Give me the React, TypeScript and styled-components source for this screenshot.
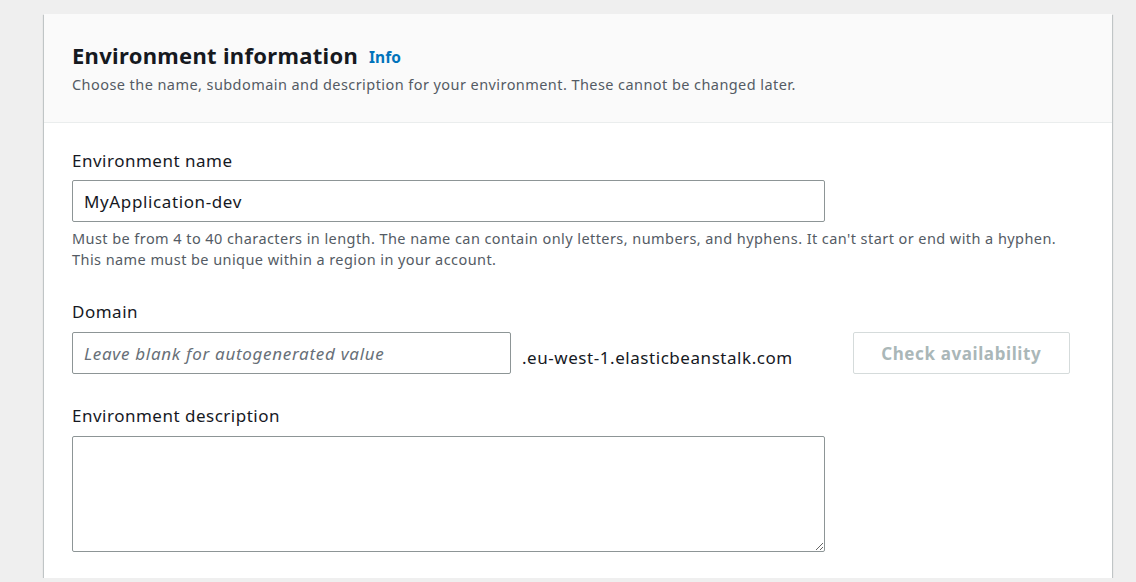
import React from "react";
import styled, { createGlobalStyle } from "styled-components";

const Global = createGlobalStyle`
  html, body { margin: 0; padding: 0; }
  body {
    background: #efefef;
    font-family: "Noto Sans", "Open Sans", sans-serif;
    color: #16191f;
  }
`;

const Page = styled.div`
  padding: 14px 24px 0 44px;
  width: 1068px;
`;

const Card = styled.section`
  background: #ffffff;
  box-shadow: 0 1px 1px 0 rgba(0, 28, 36, 0.3), 1px 1px 1px 0 rgba(0, 28, 36, 0.15),
    -1px 1px 1px 0 rgba(0, 28, 36, 0.15);
`;

const Header = styled.header`
  background: #fafafa;
  border-bottom: 1px solid #eaeded;
  padding: 26px 28px 27px;
`;

const TitleRow = styled.div`
  display: flex;
  align-items: baseline;
  gap: 11px;
`;

const Title = styled.h2`
  margin: 0;
  font-size: 22px;
  line-height: 30px;
  font-weight: 700;
  letter-spacing: 0.3px;
  color: #16191f;
`;

const InfoLink = styled.a`
  font-size: 15.5px;
  font-weight: 700;
  color: #0073bb;
  text-decoration: none;
  position: relative;
  top: -1px;
`;

const Description = styled.p`
  margin: 3px 0 0;
  font-size: 14.5px;
  line-height: 22px;
  letter-spacing: 0.43px;
  color: #545b64;
`;

const Body = styled.div`
  padding: 27px 28px 26px;
  display: flex;
  flex-direction: column;
  gap: 30px;
`;

const Field = styled.div<{ $gapBefore?: number }>`
  display: flex;
  flex-direction: column;
  margin-top: ${(p) => p.$gapBefore ?? 0}px;
`;

const Label = styled.label<{ $space?: number }>`
  font-size: 17px;
  line-height: 22px;
  letter-spacing: 0.5px;
  color: #16191f;
  margin-bottom: ${(p) => p.$space ?? 8}px;
`;

const TextInput = styled.input<{ $width: number }>`
  box-sizing: border-box;
  width: ${(p) => p.$width}px;
  height: 42px;
  border: 1px solid #8d9596;
  border-radius: 2px;
  padding: 0 11px;
  font-family: inherit;
  font-size: 17px;
  letter-spacing: 0.62px;
  color: #16191f;
  background: #fff;
  outline: none;
  &::placeholder {
    color: #687078;
    font-style: italic;
    letter-spacing: 0.7px;
  }
`;

const Help = styled.p`
  margin: 6px 0 0;
  font-size: 14.5px;
  line-height: 21px;
  letter-spacing: 0.43px;
  color: #545b64;
`;

const DomainRow = styled.div`
  display: flex;
  align-items: center;
`;

const Suffix = styled.span`
  margin-left: 11px;
  margin-top: 8px;
  font-size: 17px;
  letter-spacing: 0.55px;
  color: #16191f;
`;

const Button = styled.button`
  box-sizing: border-box;
  margin-left: 60px;
  width: 217px;
  height: 42px;
  border: 1px solid #d5dbdb;
  border-radius: 2px;
  background: #fff;
  font-family: inherit;
  font-size: 17px;
  letter-spacing: 0.6px;
  font-weight: 700;
  color: #aab7b8;
  cursor: default;
`;

const TextArea = styled.textarea`
  box-sizing: border-box;
  width: 753px;
  height: 116px;
  border: 1px solid #8d9596;
  border-radius: 2px;
  font-family: inherit;
  font-size: 16px;
  outline: none;
  display: block;
`;

export default function App() {
  return (
    <>
      <Global />
      <Page>
        <Card>
          <Header>
            <TitleRow>
              <Title>Environment information</Title>
              <InfoLink href="#">Info</InfoLink>
            </TitleRow>
            <Description>
              Choose the name, subdomain and description for your environment. These cannot be changed later.
            </Description>
          </Header>
          <Body>
            <Field>
              <Label>Environment name</Label>
              <TextInput $width={753} defaultValue="MyApplication-dev" />
              <Help>
                Must be from 4 to 40 characters in length. The name can contain only letters, numbers, and hyphens. It can't start or end with a hyphen.
                <br />
                This name must be unique within a region in your account.
              </Help>
            </Field>
            <Field $gapBefore={1}>
              <Label $space={9}>Domain</Label>
              <DomainRow>
                <TextInput $width={439} placeholder="Leave blank for autogenerated value" />
                <Suffix>.eu-west-1.elasticbeanstalk.com</Suffix>
                <Button disabled>Check availability</Button>
              </DomainRow>
            </Field>
            <Field $gapBefore={1}>
              <Label $space={9}>Environment description</Label>
              <TextArea />
            </Field>
          </Body>
        </Card>
      </Page>
    </>
  );
}
